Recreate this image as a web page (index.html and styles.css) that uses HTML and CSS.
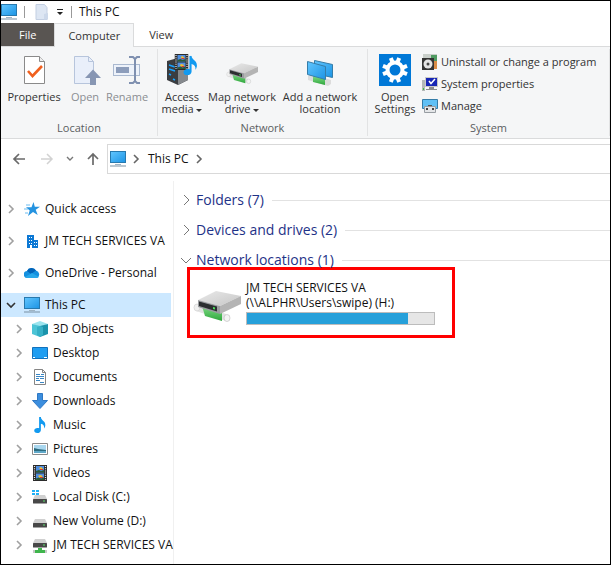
FILE: index.html
```html
<!DOCTYPE html>
<html lang="en">
<head>
    <meta charset="UTF-8">
    <meta name="viewport" content="width=device-width, initial-scale=1.0">
    <title>This PC</title>
    <link rel="stylesheet" href="styles.css">
</head>
<body>
    <!-- Shared icons -->
    <svg class="sprite" aria-hidden="true">
        <defs>
            <linearGradient id="screenFill" x1="0" y1="0" x2="1" y2="1">
                <stop offset="0" stop-color="#62c6ff"/>
                <stop offset="1" stop-color="#1c94e4"/>
            </linearGradient>
            <linearGradient id="driveTop" x1="0" y1="0" x2="1" y2="1">
                <stop offset="0" stop-color="#e9e9e9"/>
                <stop offset="1" stop-color="#c6c6c6"/>
            </linearGradient>
            <linearGradient id="pipeGreen" x1="0" y1="0" x2="0" y2="1">
                <stop offset="0" stop-color="#7fdc86"/>
                <stop offset="1" stop-color="#2fa63c"/>
            </linearGradient>
        </defs>
        <symbol id="pc" viewBox="0 0 16 16">
            <rect x="0.5" y="0.5" width="15" height="11" fill="url(#screenFill)" stroke="#2779ae"/>
            <path d="M5 13h6v1H5z" fill="#9fb4c4"/>
            <path d="M0 14.500h16v1H0z" fill="#7890a2"/>
        </symbol>
        <symbol id="chevron" viewBox="0 0 10 10">
            <path d="M3 1l4 4-4 4" fill="none" stroke="currentColor" stroke-width="1.600"/>
        </symbol>
        <symbol id="chevron-thin" viewBox="0 0 12 12">
            <path d="M4 1l5 5-5 5" fill="none" stroke="currentColor"/>
        </symbol>
        <symbol id="film" viewBox="0 0 14 16">
            <rect width="14" height="16" fill="#2b2b2b"/>
            <rect x="3" y="1" width="8" height="6.500" fill="#4f8ee0"/>
            <rect x="3" y="8.500" width="8" height="6.500" fill="#4f8ee0"/>
            <path d="M3 6l3-1 2 1 3-1v2.500H3zM3 13.500l3-1 2 1 3-1V15H3z" fill="#2c5a38"/>
            <path d="M6 3l2-1 2 2-2 1zM5 11l2-1 3 1-3 2z" fill="#f0c030"/>
            <path d="M7 4h3v1H7zM7 12h3v1H7z" fill="#d43b2c"/>
            <path d="M1.500 1v14M12.500 1v14" stroke="#eee" stroke-width="1.200" stroke-dasharray="1 1.200"/>
        </symbol>
        <symbol id="note" viewBox="0 0 14 18">
            <path d="M6 0h2c0 4 5 4 5 9 0 1.500-.6 3-1.400 4 .5-3-.9-5-3.600-5.500V14.500C8 16.500 6.200 18 3.900 18S.5 17 .5 15.300s1.700-3 3.700-3c.7 0 1.300.1 1.800.3z" fill="#129af0"/>
        </symbol>
        <symbol id="netdrive" viewBox="0 0 48 36">
            <path d="M3 15l30 10v7L3 22z" fill="#e2e2e2"/>
            <path d="M9 17l20 6v9l-17-5z" fill="url(#pipeGreen)"/>
            <ellipse cx="4" cy="18.500" rx="3" ry="3.500" fill="#f0f0f0" stroke="#ccc" stroke-width=".6"/>
            <ellipse cx="34" cy="29" rx="3" ry="3.500" fill="#f4f4f4" stroke="#bbb" stroke-width=".6"/>
            <path d="M5 11L23 2l25 5-21 10z" fill="url(#driveTop)"/>
            <path d="M5 11l22 6v8L5 18z" fill="#9b9da0"/>
            <path d="M6 12.500l18 5v5L6 17z" fill="#2c2e30"/>
            <path d="M27 17L48 7v8L27 25z" fill="#b4b4b4"/>
            <path d="M20 18l2 .6v2l-2-.6z" fill="#4be35b"/>
        </symbol>
        <symbol id="disk" viewBox="0 0 16 9">
            <path d="M3 0h10l2 4H1z" fill="#d0d0d0"/>
            <rect x="1" y="4" width="14" height="4.500" rx=".5" fill="#484848"/>
            <rect x="11" y="5.500" width="2" height="1" fill="#5be06c"/>
        </symbol>
    </svg>

    <div class="window">
        <header class="title-bar">
            <svg class="icon-16" viewBox="0 0 16 16"><use href="#pc"/></svg>
            <span class="divider"></span>
            <svg class="icon-16 doc-icon" viewBox="0 0 16 16">
                <path d="M2 .5h8.500l2.500 3v12H2z" fill="#dde6f3" stroke="#c3cfe2"/>
                <path d="M10 10v5.500h4V9z" fill="#ccd8ea"/>
            </svg>
            <button class="quick-menu" aria-label="Customize Quick Access Toolbar">
                <svg width="8" height="8" viewBox="0 0 8 8"><path d="M1 1h6v1H1zM1 4h6L4 7z" fill="#222"/></svg>
            </button>
            <span class="divider"></span>
            <h1 class="title">This PC</h1>
        </header>

        <nav class="tabs">
            <button class="tab tab-file">File</button>
            <button class="tab tab-active">Computer</button>
            <button class="tab">View</button>
        </nav>

        <section class="ribbon">
            <div class="ribbon-group">
                <div class="ribbon-items">
                    <button class="big-button wide">
                        <svg class="icon-32" viewBox="0 0 32 32">
                            <path d="M6.500 2.500h15l5 5v22h-20z" fill="#fff" stroke="#8a8a8a"/>
                            <path d="M21.500 2.500v5h5" fill="#eee" stroke="#8a8a8a"/>
                            <path d="M10 17l4.500 5L24 12" fill="none" stroke="#f0601e" stroke-width="2.600"/>
                        </svg>
                        Properties
                    </button>
                    <button class="big-button narrow" disabled>
                        <svg class="icon-32" viewBox="0 0 32 32">
                            <path d="M5.500 2.500h14l5 5v22h-19z" fill="#e9effa" stroke="#b7c5dc"/>
                            <path d="M19.500 2.500v5h5" fill="none" stroke="#b7c5dc"/>
                            <path d="M16 24l8-8.500 8 8.500h-5v7h-6v-7z" fill="#8796b3"/>
                        </svg>
                        Open
                    </button>
                    <button class="big-button narrow" disabled>
                        <svg class="icon-32" viewBox="0 0 32 32">
                            <rect x="2.500" y="10.500" width="26" height="11" fill="#edf2fa" stroke="#aab9d0"/>
                            <rect x="5" y="13" width="13" height="6" fill="#8c9dbb"/>
                            <path d="M18 3h4l2 2 2-2h3M24 4v24M18 29h4l2-2 2 2h3" fill="none" stroke="#7f90b0" stroke-width="2"/>
                        </svg>
                        Rename
                    </button>
                </div>
                <div class="group-name">Location</div>
            </div>

            <div class="ribbon-group">
                <div class="ribbon-items">
                    <button class="big-button narrow">
                        <svg class="icon-32" viewBox="0 0 32 32">
                            <path d="M1 7l11-3 10 3v19l-10 5-11-5z" fill="#3a3d41"/>
                            <path d="M12 10l10-4v20l-10 5z" fill="#85898d"/>
                            <path d="M3 11l6 2M3 15l6 2M3 20l2 1M7 25l2 1" stroke="#18a3ff" stroke-width="1.400"/>
                            <svg x="8" y="0" width="15" height="16" viewBox="0 0 14 16"><use href="#film"/></svg>
                            <svg x="17" y="1" width="15" height="21" viewBox="0 0 14 18"><use href="#note"/></svg>
                        </svg>
                        <span>Access<br>media <i class="caret"></i></span>
                    </button>
                    <button class="big-button map">
                        <svg class="icon-32" viewBox="0 -12 48 48"><use href="#netdrive" width="48" height="36"/></svg>
                        <span>Map network<br>drive <i class="caret"></i></span>
                    </button>
                    <button class="big-button map">
                        <svg class="icon-32" viewBox="0 0 32 32">
                            <path d="M4 22l4-2 19 6v4l-3 2-20-6z" fill="#dcdcdc"/>
                            <path d="M9 22l12 3v6L9 28z" fill="url(#pipeGreen)"/>
                            <path d="M10.500 6.500l18 4v13l-18-4z" fill="url(#screenFill)" stroke="#367da8"/>
                            <path d="M3.500 7.500l18 5v13l-18-5z" fill="url(#screenFill)" stroke="#367da8"/>
                        </svg>
                        <span>Add a network<br>location</span>
                    </button>
                </div>
                <div class="group-name">Network</div>
            </div>

            <div class="ribbon-group">
                <div class="ribbon-items">
                    <button class="big-button settings">
                        <svg class="icon-32" viewBox="0 0 32 32">
                            <rect width="32" height="32" fill="#0078d7"/>
                            <circle cx="16" cy="16" r="7.500" fill="none" stroke="#fff" stroke-width="4"/>
                            <path d="M12 3.500l1.500 4M20 3.500l-1.500 4M12 28.500l1.500-4M20 28.500l-1.500-4M3.500 12l4 1.500M3.500 20l4-1.500M28.500 12l-4 1.500M28.500 20l-4-1.500" stroke="#0078d7"/>
                            <path d="M11.800 4l2 5M20.200 4l-2 5M11.800 28l2-5M20.200 28l-2-5M4 11.800l5 2M4 20.200l5-2M28 11.800l-5 2M28 20.200l-5-2" stroke="#fff" stroke-width="4"/>
                        </svg>
                        <span>Open<br>Settings</span>
                    </button>
                    <div class="small-list">
                        <button class="small-button">
                            <svg class="icon-16" viewBox="0 0 16 16">
                                <path d="M1 0h14v15H1z" fill="#c9cfca"/>
                                <path d="M9 1h6v8H9z" fill="#4f9b62"/>
                                <path d="M11 7h4v8h-4z" fill="#d98c45"/>
                                <path d="M0 4h12v12H0z" fill="#333"/>
                                <circle cx="6" cy="10" r="4.500" fill="#e4e4e4"/>
                                <circle cx="6" cy="10" r="1.500" fill="#444"/>
                            </svg>
                            Uninstall or change a program
                        </button>
                        <button class="small-button">
                            <svg class="icon-16" viewBox="0 0 16 16">
                                <path d="M0 4h3v11H0z" fill="#b4b8b8"/>
                                <path d="M1 12h1v2H1z" fill="#3fc13f"/>
                                <path d="M3 1h13v10H3z" fill="#c9c9c9"/>
                                <path d="M4 2h11v8H4z" fill="#1726b5"/>
                                <path d="M7 5l2 2.500L13 3" fill="none" stroke="#fff" stroke-width="1.500"/>
                                <path d="M7 11h5v2h3v1H4v-1h3z" fill="#8d8d8d"/>
                            </svg>
                            System properties
                        </button>
                        <button class="small-button">
                            <svg class="icon-16" viewBox="0 0 16 16">
                                <path d="M.5 1.500h15v9H.5z" fill="#5fc0f5" stroke="#347ca8"/>
                                <path d="M2.500 8.500h11v6h-11z" fill="#e4e6e8" stroke="#979da2"/>
                                <path d="M6 7h4v1H6z" fill="#555"/>
                                <path d="M4 10h2v2H4zM10 10h2v2h-2z" fill="#444"/>
                            </svg>
                            Manage
                        </button>
                    </div>
                </div>
                <div class="group-name">System</div>
            </div>
        </section>

        <div class="address-row">
            <button class="nav-button" aria-label="Back">
                <svg width="14" height="14" viewBox="0 0 14 14"><path d="M13 7H2M7 2L2 7l5 5" fill="none" stroke="#6a6a6a" stroke-width="1.700"/></svg>
            </button>
            <button class="nav-button" aria-label="Forward">
                <svg width="14" height="14" viewBox="0 0 14 14"><path d="M1 7h11M7 2l5 5-5 5" fill="none" stroke="#d2d2d2" stroke-width="1.500"/></svg>
            </button>
            <button class="nav-button slim" aria-label="Recent locations">
                <svg width="8" height="8" viewBox="0 0 8 8"><path d="M1 2l3 3 3-3" fill="none" stroke="#777" stroke-width="1.400"/></svg>
            </button>
            <button class="nav-button" aria-label="Up">
                <svg width="14" height="14" viewBox="0 0 14 14"><path d="M7 13V2M2 7l5-5 5 5" fill="none" stroke="#6a6a6a" stroke-width="1.700"/></svg>
            </button>
            <div class="address">
                <svg class="icon-16" viewBox="0 0 16 16"><use href="#pc"/></svg>
                <svg class="chevron dark" viewBox="0 0 10 10"><use href="#chevron"/></svg>
                <a class="crumb" href="#">This PC</a>
                <svg class="chevron dark" viewBox="0 0 10 10"><use href="#chevron"/></svg>
            </div>
        </div>

        <div class="content">
            <nav class="sidebar">
                <a class="tree-item spaced" href="#">
                    <svg class="chevron" viewBox="0 0 10 10"><use href="#chevron"/></svg>
                    <svg class="icon-16" viewBox="0 0 16 16">
                        <path d="M9.500 1l1.300 4.700H16l-4.300 3 2 5.300-4.700-3-5 4 1.700-5.600L2 6.300h5.500z" fill="#2493e0"/>
                        <path d="M2 4h4M0 8h4M1 12h3" stroke="#6cbcf0"/>
                    </svg>
                    Quick access
                </a>
                <a class="tree-item spaced" href="#">
                    <svg class="chevron" viewBox="0 0 10 10"><use href="#chevron"/></svg>
                    <svg class="icon-16" viewBox="0 0 16 16">
                        <path d="M3 2h7v5h4v8H8v-3H6v3H3z" fill="#0c78d4"/>
                        <path d="M5 4h1v1H5zM7 4h1v1H7zM5 7h1v1H5zM7 7h1v1H7zM5 10h1v1H5zM7 10h1v1H7zM10 9h1v1h-1zM12 9h1v1h-1zM10 12h1v1h-1zM12 12h1v1h-1z" fill="#fff"/>
                    </svg>
                    JM TECH SERVICES VA
                </a>
                <a class="tree-item spaced" href="#">
                    <svg class="chevron" viewBox="0 0 10 10"><use href="#chevron"/></svg>
                    <svg class="icon-16" viewBox="0 0 16 16">
                        <path d="M3.500 13A3.500 3.500 0 0 1 3 6a5 5 0 0 1 9-.5 4 4 0 0 1 1 7.500z" fill="#1490df"/>
                        <path d="M3 6a5 5 0 0 1 9-.5L7 9z" fill="#0364b8"/>
                        <path d="M1 12l7-4 7 4-2 1H3.500z" fill="#28a8ea"/>
                    </svg>
                    OneDrive - Personal
                </a>
                <a class="tree-item selected" href="#">
                    <svg class="chevron open" viewBox="0 0 10 10"><use href="#chevron"/></svg>
                    <svg class="icon-16" viewBox="0 0 16 16"><use href="#pc"/></svg>
                    This PC
                </a>
                <a class="tree-item child" href="#">
                    <svg class="chevron" viewBox="0 0 10 10"><use href="#chevron"/></svg>
                    <svg class="icon-16" viewBox="0 0 16 16">
                        <path d="M0 3l8-3 8 3-8 3z" fill="#9be4ee"/>
                        <path d="M0 3l8 2v11l-8-3z" fill="#4cc4d6"/>
                        <path d="M16 3l-8 2v11l8-3z" fill="#1a93ab"/>
                        <path d="M5 6l3-1 3 1v8l-3 2-3-2z" fill="#36b0c6"/>
                    </svg>
                    3D Objects
                </a>
                <a class="tree-item child" href="#">
                    <svg class="chevron" viewBox="0 0 10 10"><use href="#chevron"/></svg>
                    <svg class="icon-16" viewBox="0 0 16 16">
                        <path d="M.5 2.500h15v11H.5z" fill="#1e9df1" stroke="#1271bc"/>
                        <path d="M1 12.500h2M12 12.500h3" stroke="#fff"/>
                    </svg>
                    Desktop
                </a>
                <a class="tree-item child" href="#">
                    <svg class="chevron" viewBox="0 0 10 10"><use href="#chevron"/></svg>
                    <svg class="icon-16" viewBox="0 0 16 16">
                        <path d="M2.500.5h8l3 3v12h-11z" fill="#fff" stroke="#858585"/>
                        <path d="M10.500.5v3h3" fill="none" stroke="#858585"/>
                        <path d="M4 5.500h4M9 5.500h3M4 7.500h8M4 9.500h3M8 9.500h4M4 11.500h4M8 13.500h4" stroke="#3a86c4"/>
                    </svg>
                    Documents
                </a>
                <a class="tree-item child" href="#">
                    <svg class="chevron" viewBox="0 0 10 10"><use href="#chevron"/></svg>
                    <svg class="icon-16" viewBox="0 0 16 16"><path d="M5.500.5h5v7h5L8 15.500.5 7.500h5z" fill="#3c8ede" stroke="#2f78c4"/></svg>
                    Downloads
                </a>
                <a class="tree-item child" href="#">
                    <svg class="chevron" viewBox="0 0 10 10"><use href="#chevron"/></svg>
                    <svg class="icon-16" viewBox="0 0 14 18"><use href="#note" width="14" height="18"/></svg>
                    Music
                </a>
                <a class="tree-item child" href="#">
                    <svg class="chevron" viewBox="0 0 10 10"><use href="#chevron"/></svg>
                    <svg class="icon-16" viewBox="0 0 16 16">
                        <path d="M.5 2.500h15v11H.5z" fill="#fff" stroke="#8a8a8a"/>
                        <path d="M2 4h12v8H2z" fill="#a9d7ef"/>
                        <path d="M2 7l4 1 8 1v3H2z" fill="#2d6c80"/>
                        <path d="M2 10h12v2H2z" fill="#5fa8c8"/>
                    </svg>
                    Pictures
                </a>
                <a class="tree-item child" href="#">
                    <svg class="chevron" viewBox="0 0 10 10"><use href="#chevron"/></svg>
                    <svg class="icon-16" viewBox="0 0 14 16"><use href="#film"/></svg>
                    Videos
                </a>
                <a class="tree-item child" href="#">
                    <svg class="chevron" viewBox="0 0 10 10"><use href="#chevron"/></svg>
                    <svg class="icon-16" viewBox="0 0 16 16">
                        <use href="#disk" y="6" width="16" height="9"/>
                        <path d="M0 1h3v2H0zM4 1h3v2H4zM0 4h3v2H0zM4 4h3v2H4z" fill="#1fb0f5"/>
                    </svg>
                    Local Disk (C:)
                </a>
                <a class="tree-item child" href="#">
                    <svg class="chevron" viewBox="0 0 10 10"><use href="#chevron"/></svg>
                    <svg class="icon-16" viewBox="0 0 16 16"><use href="#disk" y="6" width="16" height="9"/></svg>
                    New Volume (D:)
                </a>
                <a class="tree-item child" href="#">
                    <svg class="chevron" viewBox="0 0 10 10"><use href="#chevron"/></svg>
                    <svg class="icon-16" viewBox="0 0 16 16">
                        <use href="#disk" y="2" width="16" height="9"/>
                        <path d="M6 11h4v2h5v3H1v-3h5z" fill="#3fb54c"/>
                        <path d="M1 13h2v3H1zM13 13h2v3h-2z" fill="#c8c8c8"/>
                    </svg>
                    JM TECH SERVICES VA
                </a>
            </nav>

            <main class="files">
                <h2 class="section-title">
                    <svg class="chevron-thin" viewBox="0 0 12 12"><use href="#chevron-thin"/></svg>
                    Folders (7)
                </h2>
                <h2 class="section-title">
                    <svg class="chevron-thin" viewBox="0 0 12 12"><use href="#chevron-thin"/></svg>
                    Devices and drives (2)
                </h2>
                <h2 class="section-title">
                    <svg class="chevron-thin open" viewBox="0 0 12 12"><use href="#chevron-thin"/></svg>
                    Network locations (1)
                </h2>
                <a class="drive" href="#">
                    <svg class="drive-icon" viewBox="0 0 48 36"><use href="#netdrive"/></svg>
                    <div class="drive-info">
                        <div>JM TECH SERVICES VA</div>
                        <div>(\\ALPHR\Users\swipe) (H:)</div>
                        <div class="usage"><div class="usage-fill" style="width: 86%"></div></div>
                    </div>
                </a>
            </main>
        </div>
    </div>
</body>
</html>
```
FILE: styles.css
```css
* {
    margin: 0;
    padding: 0;
    box-sizing: border-box;
}

body {
    font-family: "Open Sans", "Noto Sans", sans-serif;
    font-size: 12px;
    line-height: 16px;
    color: #111;
    background: #fff;
}

button {
    font: inherit;
    color: inherit;
    background: none;
    border: none;
}

a {
    color: inherit;
    text-decoration: none;
}

svg {
    display: block;
    flex: none;
}

.sprite {
    position: absolute;
    width: 0;
    height: 0;
}

.window {
    display: flex;
    flex-direction: column;
    min-height: 100vh;
    border: 1px solid #000;
}

.icon-16 {
    width: 16px;
    height: 16px;
}

.icon-32 {
    width: 32px;
    height: 32px;
}

/* Title bar */
.title-bar {
    display: flex;
    align-items: center;
    height: 22px;
}

.divider {
    width: 1px;
    height: 12px;
    margin: 0 7px;
    background: #999;
}

.doc-icon {
    margin-left: 2px;
}

.quick-menu {
    display: flex;
    margin-left: 6px;
}

.title {
    font-size: 12px;
    font-weight: 400;
}

/* Tabs */
.tabs {
    display: flex;
    height: 24px;
    font-size: 11px;
    border-bottom: 1px solid #dadbdc;
}

.tab {
    padding: 0 15px;
    color: #333;
}

.tab-file {
    padding: 0 18px;
    color: #fff;
    background: #595552;
}

.tab-active {
    height: 24px;
    padding: 0 13px;
    background: #f5f6f7;
    border: 1px solid #dadbdc;
    border-bottom: none;
}

/* Ribbon */
.ribbon {
    display: grid;
    grid-template-columns: 157px 210px 1fr;
    padding: 2px 0;
    font-size: 11px;
    color: #333;
    background: #f5f6f7;
    border-bottom: 1px solid #dadbdc;
}

.ribbon-group {
    display: flex;
    flex-direction: column;
    padding: 2px 3px 0;
    border-right: 1px solid #e2e3e4;
}

.ribbon-items {
    display: flex;
    height: 69px;
}

.big-button {
    display: flex;
    flex-direction: column;
    align-items: center;
    gap: 5px;
    padding-top: 3px;
    line-height: 12px;
    white-space: nowrap;
}

.big-button:disabled {
    color: #8a8d92;
}

.wide {
    width: 60px;
}

.narrow {
    width: 42px;
}

.map {
    width: 78px;
}

.settings {
    width: 48px;
}

.caret {
    display: inline-block;
    border: 3px solid transparent;
    border-top-color: #333;
    border-bottom: none;
    vertical-align: middle;
}

.small-list {
    display: flex;
    flex-direction: column;
    padding-left: 3px;
}

.small-button {
    display: flex;
    align-items: center;
    gap: 3px;
    height: 22px;
    white-space: nowrap;
}

.group-name {
    color: #5a5d61;
    text-align: center;
}

/* Address bar */
.address-row {
    display: flex;
    align-items: flex-start;
    height: 42px;
    padding: 5px 0 0 4px;
}

.nav-button {
    display: flex;
    align-items: center;
    justify-content: center;
    width: 28px;
    height: 30px;
}

.slim {
    width: 18px;
}

.address {
    display: flex;
    flex: 1;
    align-items: center;
    gap: 5px;
    height: 30px;
    padding-left: 2px;
    border: 1px solid #d9d9d9;
    border-right: none;
}

.crumb {
    margin-left: 2px;
}

.chevron {
    width: 10px;
    height: 10px;
    color: #a0a0a0;
}

.chevron.dark {
    color: #666;
}

.open {
    color: #333;
    transform: rotate(90deg);
}

/* Content */
.content {
    display: flex;
    flex: 1;
}

.sidebar {
    width: 173px;
    padding: 16px 2px 4px 0;
    border-right: 1px solid #f0f0f0;
}

.tree-item {
    display: flex;
    align-items: center;
    gap: 8px;
    height: 24px;
    padding-left: 5px;
    white-space: nowrap;
}

.tree-item .icon-16 {
    margin-right: -3px;
}

.spaced {
    margin-bottom: 8px;
}

.child {
    padding-left: 13px;
}

.selected {
    background: #cce8ff;
}

.files {
    flex: 1;
    min-width: 0;
    padding: 4px 0 0 6px;
}

.section-title {
    display: flex;
    align-items: center;
    gap: 4px;
    height: 30px;
    font-size: 14px;
    font-weight: 400;
    color: #1e3287;
}

.section-title::after {
    content: '';
    flex: 1;
    height: 1px;
    margin-left: 4px;
    background: #e2e2e2;
}

.chevron-thin {
    width: 12px;
    height: 12px;
    color: #777;
}

.drive {
    display: flex;
    align-items: center;
    gap: 5px;
    width: 268px;
    height: 71px;
    margin: -8px 0 0 7px;
    padding-left: 3px;
    border: 3px solid #f00;
}

.drive-icon {
    width: 48px;
    height: 36px;
    margin-top: 8px;
}

.drive-info {
    line-height: 15px;
    white-space: nowrap;
}

.usage {
    width: 189px;
    height: 13px;
    margin-top: 2px;
    background: #e6e6e6;
    border: 1px solid #bcbcbc;
}

.usage-fill {
    height: 100%;
    background: #26a0da;
}
```
